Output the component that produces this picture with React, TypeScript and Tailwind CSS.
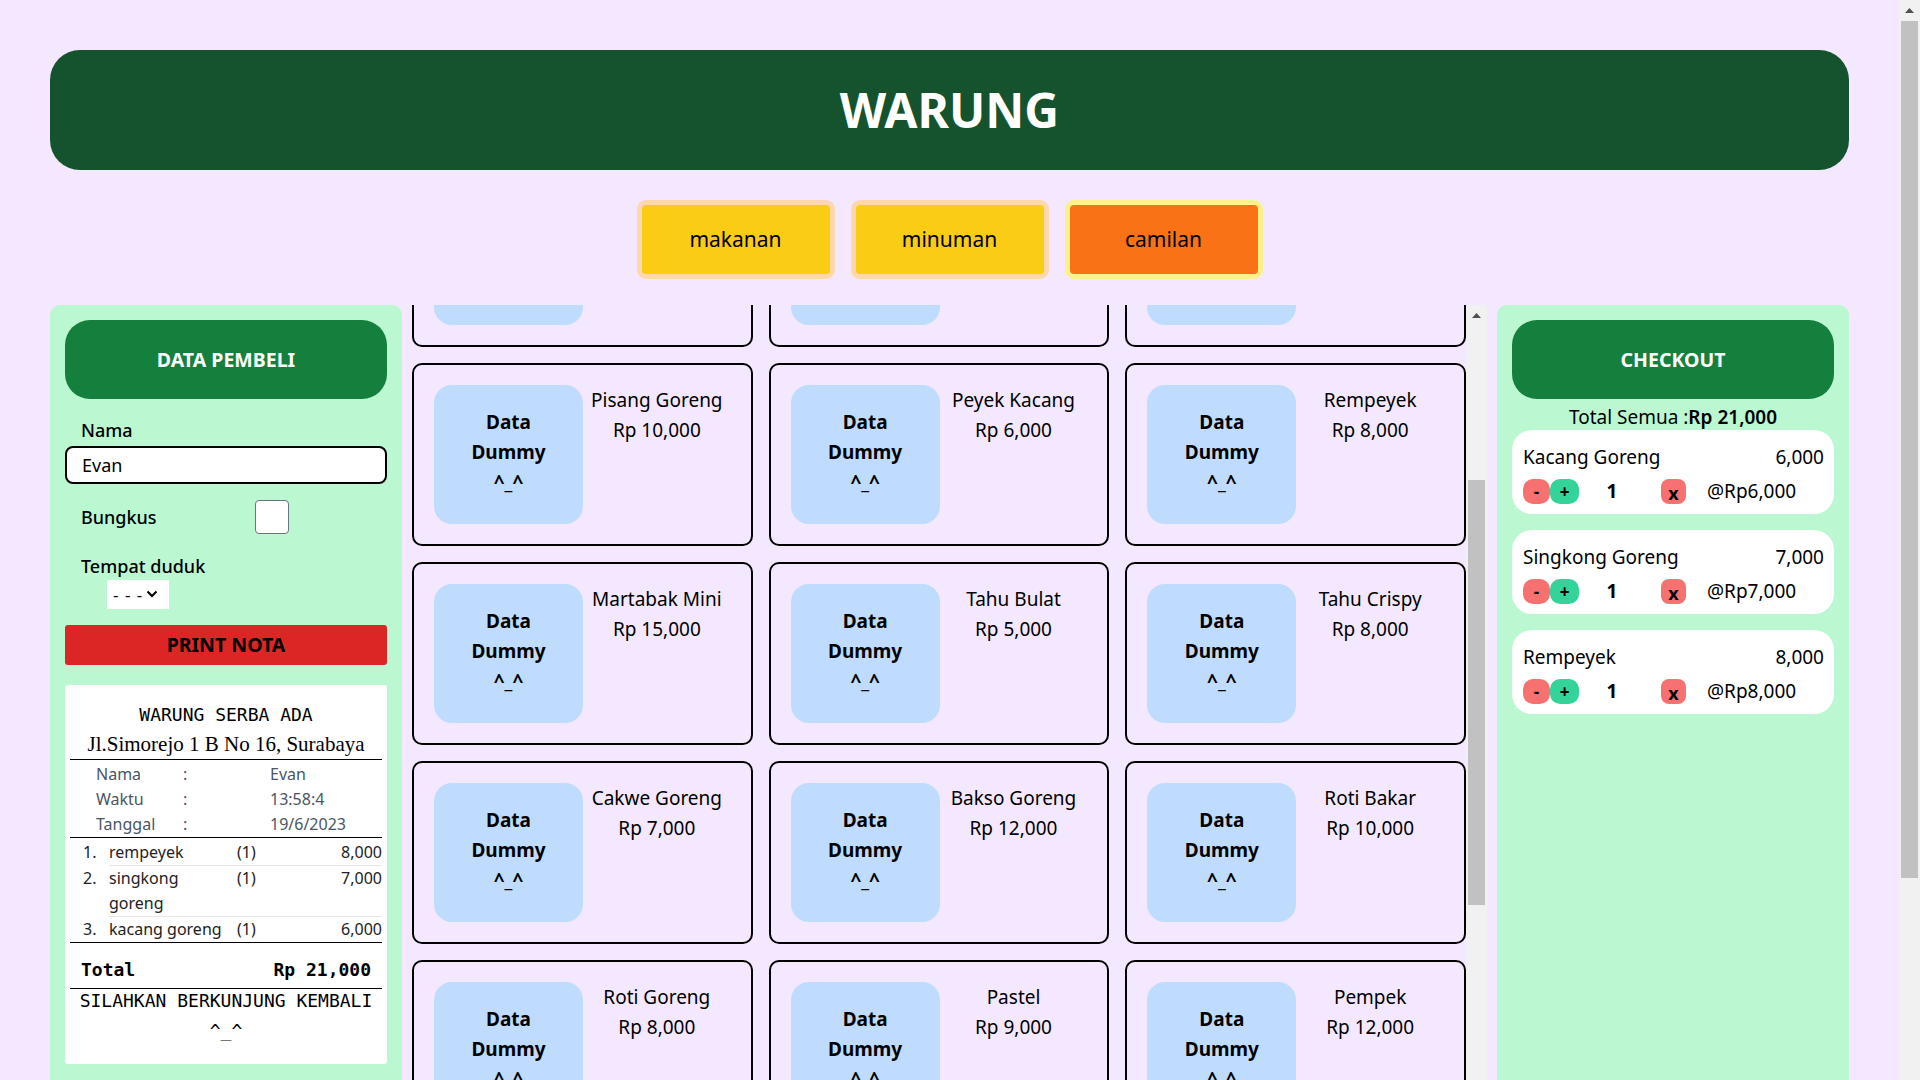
import { useEffect, useLayoutEffect, useRef } from "react";

const products: [string, number][] = [
  ["Kacang Goreng", 6000],
  ["Singkong Goreng", 7000],
  ["Tahu Isi", 5000],
  ["Keripik Tempe", 5000],
  ["Keripik Singkong", 5000],
  ["Kerupuk", 2000],
  ["Pisang Goreng", 10000],
  ["Peyek Kacang", 6000],
  ["Rempeyek", 8000],
  ["Martabak Mini", 15000],
  ["Tahu Bulat", 5000],
  ["Tahu Crispy", 8000],
  ["Cakwe Goreng", 7000],
  ["Bakso Goreng", 12000],
  ["Roti Bakar", 10000],
  ["Roti Goreng", 8000],
  ["Pastel", 9000],
  ["Pempek", 12000],
  ["Lumpia", 6000],
  ["Risoles", 5000],
  ["Onde-onde", 4000],
  ["Tempe Mendoan", 5000],
  ["Ubi Goreng", 6000],
  ["Cireng", 5000],
];

const cart = [
  { name: "Kacang Goreng", price: 6000 },
  { name: "Singkong Goreng", price: 7000 },
  { name: "Rempeyek", price: 8000 },
];

const fmt = (n: number) => n.toLocaleString("en-US");

const SCROLL = 340;

function UpArrow() {
  return (
    <svg width="9" height="5" viewBox="0 0 9 5">
      <path d="M4.5 0 L9 5 L0 5 Z" fill="#505050" />
    </svg>
  );
}

function ProductCard({ name, price }: { name: string; price: number }) {
  return (
    <div className="h-[183px] rounded-[10px] border-2 border-black p-5 flex">
      <div className="w-[149px] shrink-0 rounded-[18px] bg-[#bfdbfe] flex flex-col items-center justify-center pb-[6px] text-[19px] font-bold leading-[30px] text-black">
        <span>Data</span>
        <span>Dummy</span>
        <span>^_^</span>
      </div>
      <div className="flex-1 text-center text-[19px] leading-[30px] text-black">
        <p>{name}</p>
        <p>Rp {fmt(price)}</p>
      </div>
    </div>
  );
}

function CartItem({ name, price }: { name: string; price: number }) {
  return (
    <div className="rounded-[20px] bg-white pl-[11px] pr-[10px] pt-[13px] pb-[9px] text-black">
      <div className="flex justify-between text-[19px] leading-[28px]">
        <span>{name}</span>
        <span>{fmt(price)}</span>
      </div>
      <div className="mt-[7px] flex items-center h-[27px] text-[19px]">
        <button className="w-[27px] h-[25px] rounded-[10px] bg-[#f87171] font-bold text-[17px] leading-none flex items-center justify-center">
          -
        </button>
        <button className="w-[29px] h-[25px] rounded-[10px] bg-[#34d399] font-bold text-[17px] leading-none flex items-center justify-center">
          +
        </button>
        <span className="w-[66px] text-center font-bold">1</span>
        <button className="ml-4 w-[25px] h-[25px] rounded-[8px] bg-[#f87171] font-bold text-[18px] leading-none flex items-end justify-center pb-[2px]">
          x
        </button>
        <span className="ml-[21px]">@Rp{fmt(price)}</span>
      </div>
    </div>
  );
}

export default function App() {
  const scrollRef = useRef<HTMLDivElement>(null);
  const apply = () => {
    if (scrollRef.current) scrollRef.current.scrollTop = SCROLL;
  };
  useLayoutEffect(() => {
    apply();
  }, []);
  useEffect(() => {
    apply();
    const raf = requestAnimationFrame(apply);
    const t1 = setTimeout(apply, 0);
    const t2 = setTimeout(apply, 100);
    return () => {
      cancelAnimationFrame(raf);
      clearTimeout(t1);
      clearTimeout(t2);
    };
  }, []);

  return (
    <div className="flex h-screen w-full overflow-hidden bg-[#f3e8ff] font-['Noto_Sans',sans-serif] text-black">
      <div className="flex-1 min-w-0 px-[50px] pt-[50px]">
        <header className="h-[120px] rounded-[30px] bg-[#14532d] flex items-center justify-center">
          <h1 className="text-[48px] font-bold text-white leading-[60px]">WARUNG</h1>
        </header>

        <nav className="mt-[30px] flex justify-center gap-4">
          <button className="w-[198px] h-[79px] rounded-[9px] border-[5px] border-[#fed7aa] bg-[#facc15] text-[21px]">
            makanan
          </button>
          <button className="w-[198px] h-[79px] rounded-[9px] border-[5px] border-[#fed7aa] bg-[#facc15] text-[21px]">
            minuman
          </button>
          <button className="w-[198px] h-[79px] rounded-[9px] border-[5px] border-[#fef08a] bg-[#f97316] text-[21px]">
            camilan
          </button>
        </nav>

        <main className="mt-[26px] grid grid-cols-[352px_1fr_352px] gap-[10px] h-[950px]">
          {/* Left panel */}
          <section className="rounded-[10px] bg-[#bbf7d0] p-[15px] flex flex-col">
            <div className="h-[79px] shrink-0 rounded-[25px] bg-[#15803d] flex items-center justify-center text-white font-bold text-[19.5px]">
              DATA PEMBELI
            </div>
            <label className="mt-[19px] pl-4 text-[18px] font-medium leading-[24px]">Nama</label>
            <input
              defaultValue="Evan"
              className="mt-[4px] h-[38px] shrink-0 rounded-lg border-2 border-black bg-white px-[15px] text-[18px] outline-none"
            />
            <div className="mt-[16px] h-[34px] flex items-center shrink-0">
              <span className="w-[190px] pl-4 text-[18px] font-medium">Bungkus</span>
              <input
                type="checkbox"
                className="appearance-none w-[34px] h-[34px] bg-white border border-gray-500 rounded-[4px]"
              />
            </div>
            <span className="mt-[20px] pl-4 text-[18px] font-medium leading-[24px]">Tempat duduk</span>
            <div className="mt-[2px] ml-[42px] w-[62px] h-[29px] shrink-0 bg-white flex items-center pl-[6px] gap-[3px] text-[17px] tracking-[1px]">
              <span>- - -</span>
              <svg width="12" height="8" viewBox="0 0 12 8" className="mb-[2px]">
                <path d="M1.5 1.5 L6 6 L10.5 1.5" stroke="#000" strokeWidth="2" fill="none" />
              </svg>
            </div>
            <button className="mt-[16px] h-[40px] shrink-0 rounded-[3px] bg-[#dc2626] text-[19.5px] font-bold text-black">
              PRINT NOTA
            </button>

            <div className="mt-[20px] rounded-[3px] bg-white px-[5px] pt-[16px] pb-[15px]">
              <p className="text-center font-['DejaVu_Sans_Mono',monospace] text-[18px] leading-[28px]">
                WARUNG SERBA ADA
              </p>
              <p className="text-center font-['Liberation_Serif',serif] text-[21px] leading-[30px]">
                Jl.Simorejo 1 B No 16, Surabaya
              </p>
              <div className="border-t border-black" />
              <div className="grid grid-cols-[87px_87px_1fr] pl-[26px] pt-[2px] text-[16px] leading-[25px] text-gray-600">
                <span>Nama</span>
                <span>:</span>
                <span>Evan</span>
                <span>Waktu</span>
                <span>:</span>
                <span>13:58:4</span>
                <span>Tanggal</span>
                <span>:</span>
                <span>19/6/2023</span>
              </div>
              <div className="border-t border-black" />
              <div className="pt-[2px] text-[16px] leading-[25px] text-[#222]">
                <div className="flex">
                  <span className="w-[39px] shrink-0 pl-[13px]">1.</span>
                  <div className="flex-1 flex border-b border-gray-200">
                    <span className="w-[128px]">rempeyek</span>
                    <span className="flex-1">(1)</span>
                    <span>8,000</span>
                  </div>
                </div>
                <div className="flex">
                  <span className="w-[39px] shrink-0 pl-[13px]">2.</span>
                  <div className="flex-1 flex border-b border-gray-200">
                    <span className="w-[128px]">
                      singkong
                      <br />
                      goreng
                    </span>
                    <span className="flex-1">(1)</span>
                    <span>7,000</span>
                  </div>
                </div>
                <div className="flex">
                  <span className="w-[39px] shrink-0 pl-[13px]">3.</span>
                  <div className="flex-1 flex">
                    <span className="w-[128px]">kacang goreng</span>
                    <span className="flex-1">(1)</span>
                    <span>6,000</span>
                  </div>
                </div>
              </div>
              <div className="border-t border-black" />
              <div className="mt-[14px] mb-[5px] px-[11px] flex justify-between font-['DejaVu_Sans_Mono',monospace] text-[18px] font-bold leading-[26px]">
                <span>Total</span>
                <span>Rp 21,000</span>
              </div>
              <div className="border-t border-black" />
              <p className="text-center font-['DejaVu_Sans_Mono',monospace] text-[18px] leading-[24px]">
                SILAHKAN BERKUNJUNG KEMBALI
              </p>
              <p className="text-center font-['DejaVu_Sans_Mono',monospace] text-[18px] leading-[36px]">^_^</p>
            </div>
          </section>

          {/* Center product list */}
          <section className="flex min-w-0 h-[950px]">
            <div ref={scrollRef} className="flex-1 min-w-0 h-[950px] overflow-hidden">
              <div className="grid grid-cols-3 gap-4">
                {products.map(([n, p]) => (
                  <ProductCard key={n} name={n} price={p} />
                ))}
              </div>
            </div>
            <div className="w-[21px] shrink-0 bg-[#f1f1f1] flex flex-col">
              <div className="h-[21px] flex items-center justify-center">
                <UpArrow />
              </div>
              <div className="h-[154px]" />
              <div className="mx-[2px] h-[425px] bg-[#c1c1c1]" />
            </div>
          </section>

          {/* Right panel */}
          <section className="rounded-[10px] bg-[#bbf7d0] p-[15px] flex flex-col">
            <div className="h-[79px] shrink-0 rounded-[25px] bg-[#15803d] flex items-center justify-center text-white font-bold text-[19.5px]">
              CHECKOUT
            </div>
            <p className="mt-[5px] text-center text-[19px] leading-[26px]">
              Total Semua :<span className="font-semibold">Rp 21,000</span>
            </p>
            <div className="flex flex-col gap-4">
              {cart.map((c) => (
                <CartItem key={c.name} name={c.name} price={c.price} />
              ))}
            </div>
          </section>
        </main>
      </div>

      {/* page scrollbar */}
      <div className="w-[21px] shrink-0 bg-[#f1f1f1] flex flex-col">
        <div className="h-[21px] flex items-center justify-center">
          <UpArrow />
        </div>
        <div className="mx-[2px] h-[857px] bg-[#c1c1c1]" />
      </div>
    </div>
  );
}
